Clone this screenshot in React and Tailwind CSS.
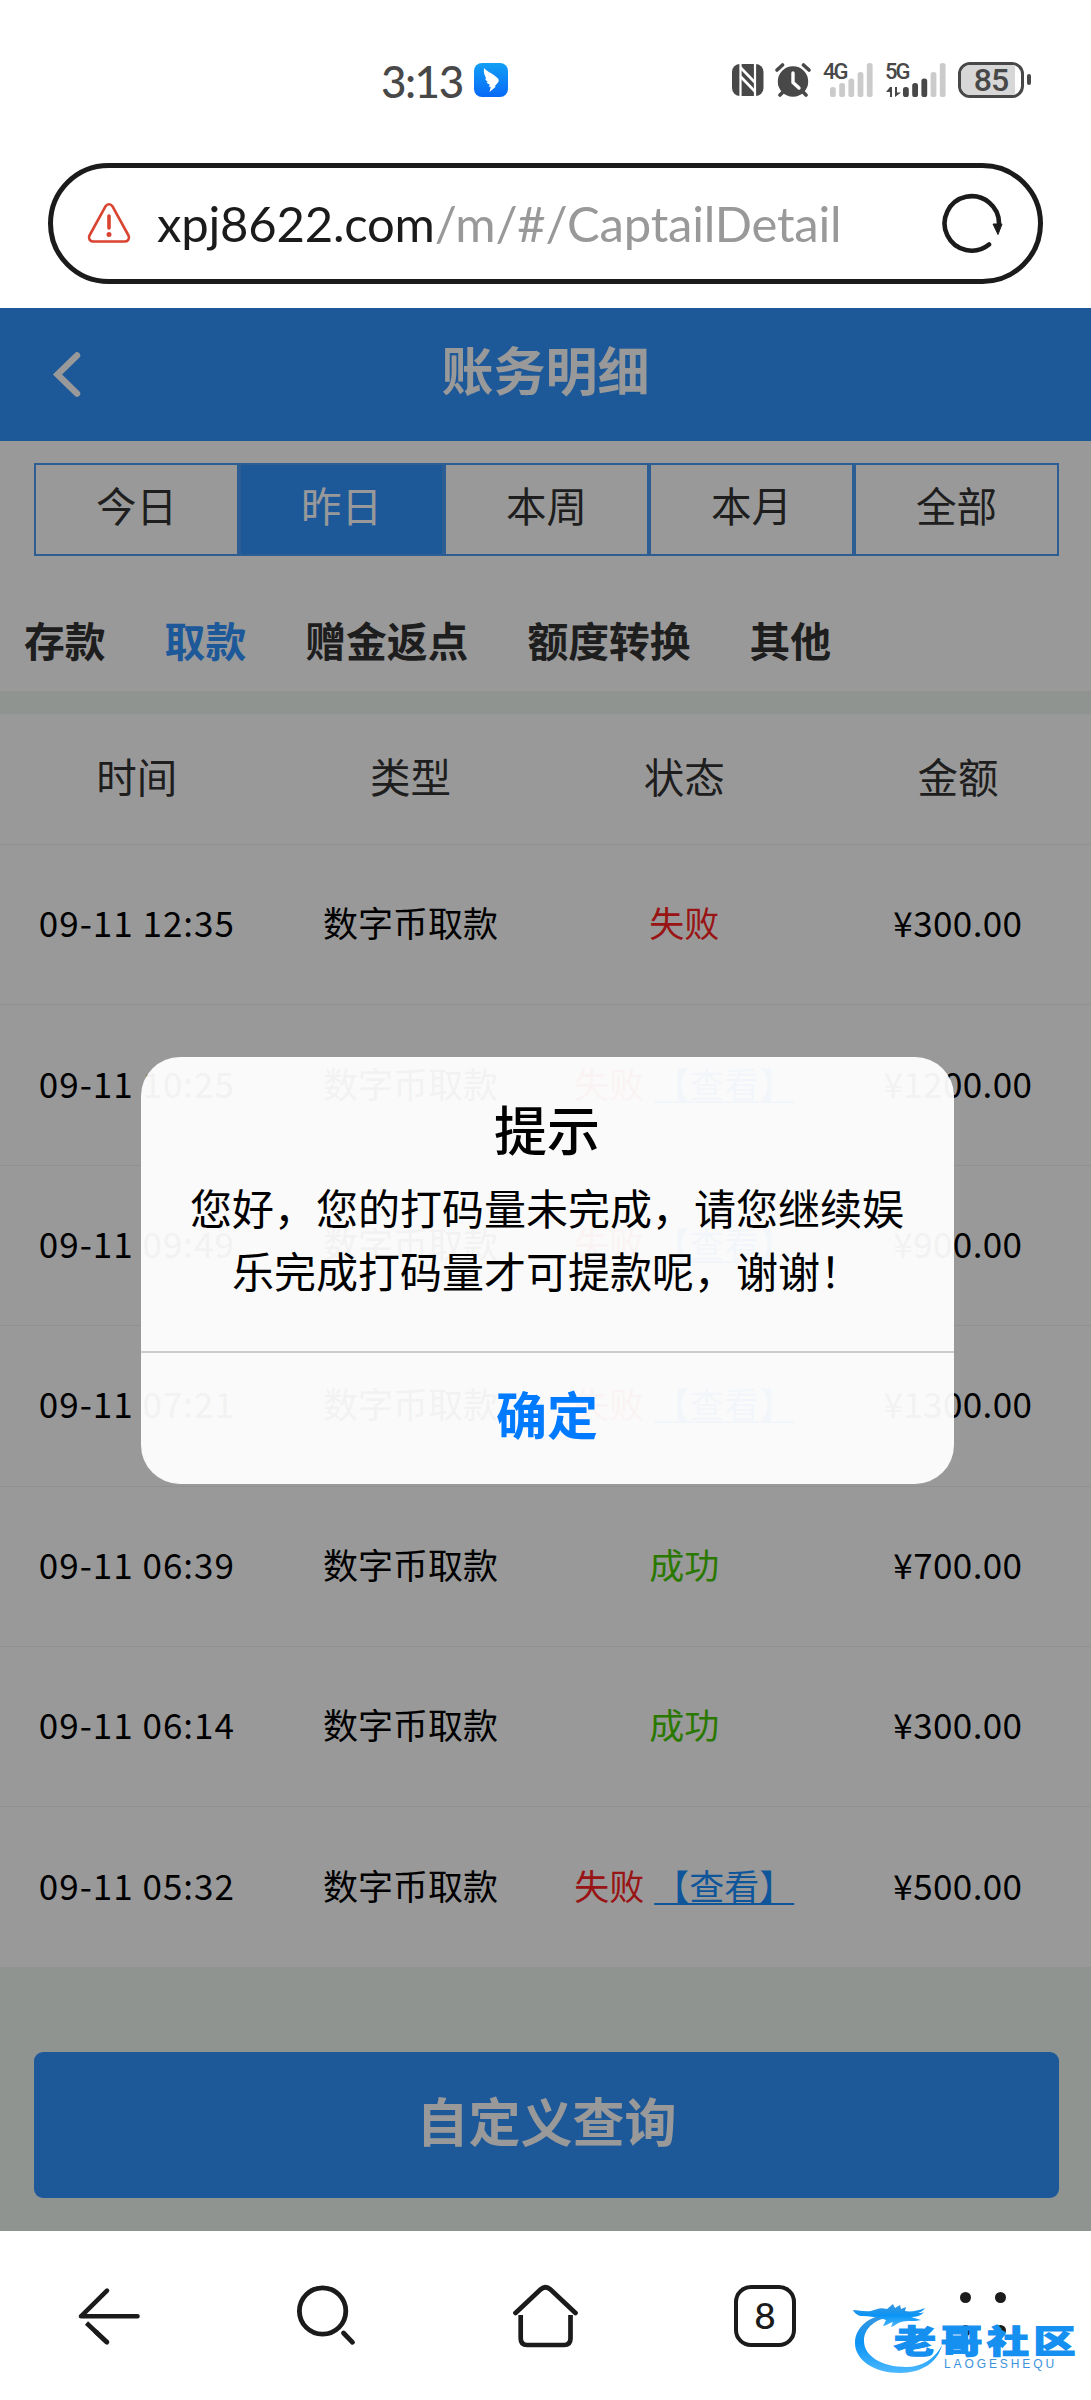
import { useState } from "react";

const RANGES = ["今日", "昨日", "本周", "本月", "全部"];

const CATEGORIES = ["存款", "取款", "赠金返点", "额度转换", "其他"];

const COLUMNS = ["时间", "类型", "状态", "金额"];

const RECORDS = [
  { id: 1, time: "09-11 12:35", type: "数字币取款", ok: false, link: false, amount: "¥300.00" },
  { id: 2, time: "09-11 10:25", type: "数字币取款", ok: false, link: true, amount: "¥1200.00" },
  { id: 3, time: "09-11 09:49", type: "数字币取款", ok: false, link: true, amount: "¥900.00" },
  { id: 4, time: "09-11 07:21", type: "数字币取款", ok: false, link: true, amount: "¥1300.00" },
  { id: 5, time: "09-11 06:39", type: "数字币取款", ok: true, link: false, amount: "¥700.00" },
  { id: 6, time: "09-11 06:14", type: "数字币取款", ok: true, link: false, amount: "¥300.00" },
  { id: 7, time: "09-11 05:32", type: "数字币取款", ok: false, link: true, amount: "¥500.00" },
];

function SignalBars({ active, className }) {
  const tops = [24, 20, 15.5, 9, 0];
  return (
    <svg viewBox="0 0 43 34" className={className}>
      {tops.map((t, i) => (
        <rect key={i} x={i * 9.2} y={t} width="5.8" height={34 - t} rx="2.6" fill={i < active ? "#484848" : "#cbcbcb"} />
      ))}
    </svg>
  );
}

function StatusBar() {
  return (
    <div className="h-[163px] shrink-0 flex items-start pt-[62px] text-[#484848]">
      <span className="ml-[381px] w-[93px] h-9 font-['Lato',sans-serif] font-medium text-[44px] leading-[38px] tracking-[-1.500px] whitespace-nowrap">3:13</span>
      <svg viewBox="0 0 34 34" className="w-[34px] h-[34px] mt-px">
        <defs>
          <linearGradient id="wing" x1="0" y1="0" x2="0" y2="1">
            <stop offset="0" stopColor="#119ff5" />
            <stop offset="1" stopColor="#0869f8" />
          </linearGradient>
        </defs>
        <rect width="34" height="34" rx="8" fill="url(#wing)" />
        <path d="M10 5c3 3.500 8 5 13.500 10 1.500 1.500 1.500 3 .7 4.300L20.500 23.500h1.500L15.500 29l1.300-5.200h-2l1-2.300c-1.800-.4-2.600-1.200-3.200-2.500h1.500c-1.600-.9-2.500-1.900-3-3.400h1.300C10.500 12.500 9.300 9 10 5z" fill="#fff" />
      </svg>
      {/* NFC */}
      <svg viewBox="0 0 32 32" className="w-8 h-8 ml-[224px] mt-[2px]">
        <rect width="31.500" height="32" rx="8" fill="#484848" />
        <path d="M8.500 0v32M23 0v32" stroke="#fff" strokeWidth="2.200" />
        <path d="M8.500 3.500 23 18.500M8.500 12.500 23 27.500" stroke="#fff" strokeWidth="2.600" />
      </svg>
      {/* Alarm */}
      <svg viewBox="0 0 36 34" className="w-9 h-[34px] ml-[11px] mt-px">
        <circle cx="18" cy="18.500" r="15.200" fill="#484848" />
        <path d="M2 7 7.500 2M34 7l-5.500-5M5 32l4-4M31 32l-4-4" stroke="#484848" strokeWidth="3.600" strokeLinecap="round" />
        <path d="M18 10v9.500l6 5.500" stroke="#fff" strokeWidth="3.400" fill="none" strokeLinecap="round" strokeLinejoin="round" />
      </svg>
      <div className="relative w-[50px] h-[35px] ml-[12px] mt-px">
        <span className="block font-['Roboto',sans-serif] font-medium text-[22px] leading-[17px] tracking-[-2px]">4G</span>
        <SignalBars active={0} className="absolute left-[7px] top-0 w-[43px] h-[34px]" />
      </div>
      <div className="relative w-[61px] h-[35px] ml-[12px] mt-px">
        <span className="block font-['Roboto',sans-serif] font-medium text-[22px] leading-[17px] tracking-[-2px]">5G</span>
        <svg viewBox="0 0 15 11" className="absolute left-px top-[24px] w-[15px] h-[11px]" fill="#484848">
          <path d="M4 0h2v10H4V5H0zM9 0h2v5.500h4L9 10z" />
        </svg>
        <SignalBars active={3} className="absolute left-[18px] top-0 w-[43px] h-[34px]" />
      </div>
      <div className="relative ml-[12px] w-[66px] h-[36px] rounded-[12px] border-3 border-[#484848] overflow-hidden flex items-center justify-center">
        <span className="absolute left-0 inset-y-0 w-[54px] bg-[#d7d7d7]" />
        <span className="relative font-['Roboto',sans-serif] font-medium text-[32px] leading-none tracking-[-1px]">85</span>
      </div>
      <span className="ml-[3px] mt-[12px] w-1 h-[11px] rounded-[2px] bg-[#484848]" />
    </div>
  );
}

function AddressBar() {
  return (
    <div className="h-[145px] shrink-0 px-12">
      <div className="h-[121px] w-[995px] rounded-full border-5 border-[#1b1b1b] flex items-center pl-[33px]">
        <svg viewBox="0 0 46 42" className="w-[46px] h-[42px] shrink-0 -mt-[2px]" fill="none" stroke="#d9432f" strokeWidth="2.600">
          <path d="M19.600 4.200a4 4 0 0 1 6.800 0L42.500 33.500a4 4 0 0 1-3.500 6H7a4 4 0 0 1-3.500-6z" />
          <path d="M23 14v12" strokeWidth="3.600" strokeLinecap="round" />
          <circle cx="23" cy="32.500" r="1.200" />
        </svg>
        <p className="ml-[25px] w-[784px] font-['Lato',sans-serif] text-[49px] leading-none tracking-[-0.200px] whitespace-nowrap text-[#1b1b1b]">
          xpj8622.com<span className="text-[#999]">/m/#/CaptailDetail</span>
        </p>
        <svg viewBox="0 0 62 62" className="w-[62px] h-[62px] shrink-0" fill="none">
          <path d="M48 51.500A27.200 27.200 0 1 1 58 31" stroke="#1b1b1b" strokeWidth="4.600" strokeLinecap="round" />
          <path d="M52 31h9l-4 10.500z" fill="#1b1b1b" stroke="#1b1b1b" strokeLinejoin="round" />
        </svg>
      </div>
    </div>
  );
}

function RecordRow({ record }) {
  return (
    <div className="h-[160.400px] pb-[6px] grid grid-cols-[repeat(4,273.700px)] items-center text-center text-[35px] leading-none text-black border-t border-[#f0f0f0] whitespace-nowrap">
      <span className="tracking-[1px]">{record.time}</span>
      <span>{record.type}</span>
      <span className={record.ok ? "text-[#49c800]" : "text-[#ff2323]"}>
        {record.ok ? "成功" : "失败"}
        {record.link && (
          <a href="#" className="ml-[10px] text-[#1890ff] underline decoration-2 underline-offset-[3px]">【查看】</a>
        )}
      </span>
      <span className="tracking-[0.400px]">{record.amount}</span>
    </div>
  );
}

function Alert({ onClose }) {
  return (
    <div className="absolute inset-0 bg-black/40 flex justify-center items-start pt-[749px]">
      <div className="w-[813px] h-[427px] rounded-[39px] bg-white/95 overflow-hidden text-center text-black ml-[3px]">
        <div className="h-[294px] pt-[44px]">
          <h2 className="text-[53px] leading-[54px] font-medium">提示</h2>
          <p className="mt-[20px] text-[42px] leading-[63px]">
            您好，您的打码量未完成，请您继续娱
            <br />
            乐完成打码量才可提款呢，谢谢！
          </p>
        </div>
        <button onClick={onClose} className="w-full h-[133px] pb-[11px] border-t-2 border-[#ccc] text-[51px] leading-none font-bold text-[#007aff] block">
          确定
        </button>
      </div>
    </div>
  );
}

function Watermark() {
  return (
    <div className="absolute left-[850px] top-[70px] w-[240px] h-[76px]">
      <svg viewBox="0 0 240 76" className="absolute inset-0 w-full h-full">
        <defs>
          <linearGradient id="swirl" x1="0" y1="0" x2="0" y2="1">
            <stop offset="0" stopColor="#3d97dd" />
            <stop offset=".5" stopColor="#0a94f5" />
            <stop offset="1" stopColor="#4db8ff" />
          </linearGradient>
        </defs>
        <g fill="url(#swirl)">
          <path d="M39 13C17 15 5 28 5 42c0 17 19 30 45 30 22 0 38-11 42-28-7 14-20 22-36 22-24 0-42-11-42-26 0-13 11-23 32-25z" />
          <path d="M3 9c6 0 11 2 18 1 6-2 9-4 16-2l6-5 2 4 5-3 1 4 5-2-1 4c6 1 12 0 20-3-2 3-4 4-7 5 3 0 4 0 6-1-3 4-8 5-13 5l10 3c-7 2-14 0-20 2-4 1-6 4-10 5l2-5c-4 1-7 4-10 4l3-6c-8-3-17-4-24-4-3 0-7-2-9-6z" />
        </g>
      </svg>
      <span className="absolute left-[44px] top-[20px] origin-top scale-y-[.76] font-black text-[42px] leading-[48px] tracking-[4.500px] whitespace-nowrap text-[#158ff0] [-webkit-text-stroke:1.500px_#158ff0]">老哥社区</span>
      <span className="absolute left-[94px] top-[57px] font-['Liberation_Sans',sans-serif] text-[12px] leading-[12px] tracking-[2.900px] text-[#3d92dc]">LAOGESHEQU</span>
    </div>
  );
}

function BottomNav() {
  return (
    <nav className="relative h-[169px] shrink-0 bg-white text-[#1b1b1b] overflow-hidden">
      <div className="flex items-center pt-[49px] pl-[76px]">
        <svg viewBox="0 0 66 68" className="w-[66px] h-[68px]" fill="none" stroke="currentColor" strokeWidth="4.600" strokeLinecap="round">
          <path d="M61.500 34.300H5L31 8.700" strokeLinejoin="round" />
          <path d="M31 60.300 10.500 41" strokeLinecap="butt" />
          <path d="M31 60.300 20 50" />
        </svg>
        <svg viewBox="0 0 66 68" className="w-[66px] h-[68px] ml-[151px]" fill="none" stroke="currentColor" strokeWidth="4.800">
          <circle cx="29.600" cy="29" r="23.200" />
          <path d="M50.500 51 59.500 60.300" strokeLinecap="round" />
        </svg>
        <svg viewBox="0 0 70 72" className="w-[70px] h-[72px] ml-[152px]" fill="none" stroke="currentColor" strokeWidth="4.700">
          <path d="M4.500 33 29.500 9.500Q34.500 5 39.500 9.500L64.500 33" strokeLinecap="round" />
          <path d="M9.700 35V58.500Q9.700 65 16.200 65H53Q59.500 65 59.500 58.500V35" />
        </svg>
        <div className="ml-[153px] w-[62px] h-[62px] rounded-[17px] border-[4.500px] border-[#1b1b1b] flex items-center justify-center pb-[3px] font-['Lato',sans-serif] text-[37px] leading-none font-medium">8</div>
        <div className="ml-[164px] -mt-[5px] grid grid-cols-2 gap-x-6 gap-y-[22px]">
          <span className="size-[11px] rounded-full bg-[#1b1b1b]" />
          <span className="size-[11px] rounded-full bg-[#1b1b1b]" />
          <span className="size-[11px] rounded-full bg-[#1b1b1b]" />
          <span className="size-[11px] rounded-full bg-[#1b1b1b]" />
        </div>
      </div>
      <Watermark />
    </nav>
  );
}

export default function App() {
  const [range, setRange] = useState("昨日");
  const [category, setCategory] = useState("取款");
  const [showAlert, setShowAlert] = useState(true);

  return (
    <div className="w-[1091px] h-[2400px] bg-white flex flex-col overflow-hidden font-['Noto_Sans_CJK_SC',sans-serif]">
      <StatusBar />
      <AddressBar />

      <main className="relative flex-1 bg-[#eff7f2] text-[#333]">
        <header className="relative h-[133px] bg-[#3193ff] flex items-center justify-center text-white">
          <svg viewBox="0 0 30 48" className="absolute left-[52px] top-[42px] w-[30px] h-12" fill="none" stroke="currentColor" strokeWidth="6.500">
            <path d="M25 5.500 5.500 24.500 25 43.500" strokeLinecap="round" />
          </svg>
          <h1 className="text-[52px] leading-none font-bold -mt-[11px]">账务明细</h1>
        </header>

        {/* Filters */}
        <section className="h-[250px] bg-white">
          <div className="pt-[22px] pl-[34px] pr-[32px] grid grid-cols-5">
            {RANGES.map(r => (
              <button
                key={r}
                onClick={() => setRange(r)}
                className={`h-[93px] pb-[9px] border-2 border-[#4b9df5] text-[40.500px] leading-none ${
                  r === range ? "bg-[#3193ff] text-white" : ""
                }`}
              >
                {r}
              </button>
            ))}
          </div>
          <div className="mt-[55px] pl-[24px] flex gap-[59px] text-[40.800px] leading-[58px] font-bold">
            {CATEGORIES.map(c => (
              <button key={c} onClick={() => setCategory(c)} className={c === category ? "text-[#3193ff]" : ""}>{c}</button>
            ))}
          </div>
        </section>

        {/* Records */}
        <section className="mt-[23px] bg-white">
          <div className="h-[130px] pb-[6px] grid grid-cols-[repeat(4,273.700px)] items-center text-center text-[40.500px] leading-none">
            {COLUMNS.map(c => <span key={c}>{c}</span>)}
          </div>
          {RECORDS.map(r => <RecordRow key={r.id} record={r} />)}
        </section>

        <div className="pl-[34px] pr-[32px] pt-[85px]">
          <button className="w-full h-[146px] pb-[9px] rounded-[9px] bg-[#3193ff] text-white text-[52px] leading-none font-bold">自定义查询</button>
        </div>

        {showAlert && <Alert onClose={() => setShowAlert(false)} />}
      </main>

      <BottomNav />
    </div>
  );
}
